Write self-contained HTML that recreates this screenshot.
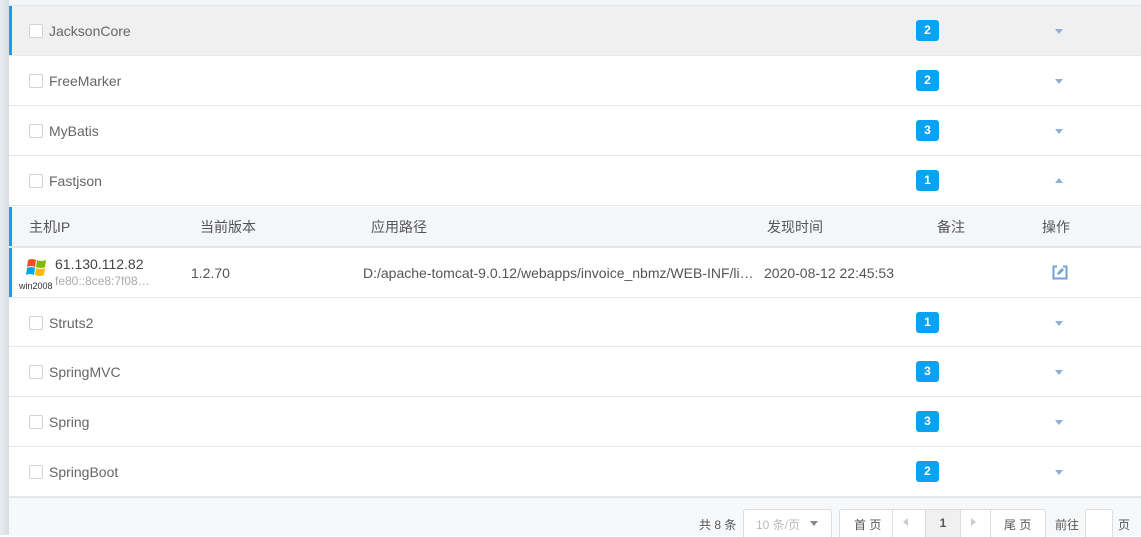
<html><head><style>
body{margin:0;width:1141px;height:535px;overflow:hidden;background:#fff;font-family:"Liberation Sans","Noto Sans CJK SC",sans-serif;position:relative}
.strip{position:absolute;left:0;top:0;width:9px;height:535px;background:linear-gradient(90deg,#e9ecf1,#d8dde5)}
.topline{position:absolute;left:9px;top:0;right:0;height:5px;background:#f3f5f8;border-bottom:1px solid #e3e6eb}
.row{position:absolute;left:9px;right:0;height:49px;border-bottom:1px solid #e6e8ec;background:#fff}
.row .cb{position:absolute;left:20px;top:18px;width:12px;height:12px;border:1px solid #cfd3d9;border-radius:2px;background:#fff}
.row .t{position:absolute;left:40px;top:17px;font-size:14px;color:#666}
.badge{position:absolute;left:907px;top:14px;width:23px;height:21px;background:#0aa3f2;border-radius:3px;color:#fff;font-size:12px;font-weight:bold;text-align:center;line-height:21px}
.arr{position:absolute;left:1046px;top:23px;width:0;height:0;border-left:4px solid transparent;border-right:4px solid transparent;border-top:5px solid #8fb0d4}
.arr.up{border-top:0;border-bottom:5px solid #8fb0d4;top:22px}
.sel{background:#f0f0f0}
.bar{position:absolute;left:0;top:0;width:3px;height:100%;background:#0aa3f2}
.hdr{position:absolute;left:9px;right:0;top:207px;height:39px;background:#f4f6f9;border-bottom:2px solid #e3e6eb;font-size:14px;color:#555}
.hdr span,.dr span{position:absolute;top:10px}
.dr{position:absolute;left:9px;right:0;top:248px;height:49px;border-bottom:1px solid #e6e8ec;font-size:14px;color:#555}
.foot{position:absolute;left:9px;right:0;top:497px;height:38px;background:#f7f8fa;border-top:1px solid #e3e6eb;font-size:12px;color:#555}
.box{position:absolute;top:11px;height:27px;border:1px solid #ddd;background:#fff;border-bottom:none;border-radius:3px 3px 0 0}
</style></head><body>
<div class="strip"></div><div class="topline"></div>
<div class="row sel" style="top:6px"><div class="bar"></div><div class="cb"></div><div class="t">JacksonCore</div><div class="badge">2</div><div class="arr"></div></div>
<div class="row" style="top:56px"><div class="cb"></div><div class="t">FreeMarker</div><div class="badge">2</div><div class="arr"></div></div>
<div class="row" style="top:106px"><div class="cb"></div><div class="t">MyBatis</div><div class="badge">3</div><div class="arr"></div></div>
<div class="row" style="top:156px"><div class="cb"></div><div class="t">Fastjson</div><div class="badge">1</div><div class="arr up"></div></div>
<div class="hdr"><div class="bar"></div><span style="left:20px">主机IP</span><span style="left:191px">当前版本</span><span style="left:362px">应用路径</span><span style="left:758px">发现时间</span><span style="left:928px">备注</span><span style="left:1033px">操作</span></div>
<div class="dr"><div class="bar"></div>
<svg style="position:absolute;left:17px;top:9px" width="22" height="20" viewBox="0 0 22 20"><path d="M2 3q4-2 8 0l-1 7q-4-2-8 0z" fill="#f25022"/><path d="M11 3q4 2 9 0l-1 7q-4 2-9 0z" fill="#7fba00"/><path d="M1 11q4-2 8 0l-1 7q-4-2-8 0z" fill="#00a4ef"/><path d="M10 11q4 2 9 0l-1 7q-4 2-9 0z" fill="#ffb900"/></svg>
<span style="left:10px;top:33px;font-size:9px;color:#333">win2008</span>
<span style="left:46px;top:8px;color:#444">61.130.112.82</span>
<span style="left:46px;top:26px;font-size:12px;color:#aaa">fe80::8ce8:7f08…</span>
<span style="left:182px;top:17px">1.2.70</span>
<span style="left:354px;top:17px">D:/apache-tomcat-9.0.12/webapps/invoice_nbmz/WEB-INF/li…</span>
<span style="left:755px;top:17px">2020-08-12 22:45:53</span>
<svg style="position:absolute;left:1043px;top:16px" width="16" height="16" viewBox="0 0 16 16"><rect x="1.5" y="2.5" width="13" height="12" fill="none" stroke="#6fa3d6" stroke-width="2"/><rect x="5" y="1" width="6" height="3" fill="#fff"/><path d="M5 11l1-3 4-4 2 2-4 4z" fill="#6fa3d6"/></svg>
</div>
<div class="row" style="top:298px;height:48px"><div class="cb"></div><div class="t">Struts2</div><div class="badge">1</div><div class="arr"></div></div>
<div class="row" style="top:347px"><div class="cb"></div><div class="t">SpringMVC</div><div class="badge">3</div><div class="arr"></div></div>
<div class="row" style="top:397px"><div class="cb"></div><div class="t">Spring</div><div class="badge">3</div><div class="arr"></div></div>
<div class="row" style="top:447px"><div class="cb"></div><div class="t">SpringBoot</div><div class="badge">2</div><div class="arr"></div></div>
<div class="foot">
<span style="position:absolute;left:690px;top:18px">共 8 条</span>
<div class="box" style="left:734px;width:87px"><span style="position:absolute;left:12px;top:6px;color:#bbb">10 条/页</span><span style="position:absolute;left:66px;top:11px;border-left:4px solid transparent;border-right:4px solid transparent;border-top:5px solid #888"></span></div>
<div class="box" style="left:830px;width:205px">
<span style="position:absolute;left:14px;top:6px">首 页</span>
<span style="position:absolute;left:52px;top:0;width:33px;height:27px;border-left:1px solid #ddd"></span>
<span style="position:absolute;left:63px;top:8px;border-top:4px solid transparent;border-bottom:4px solid transparent;border-right:5px solid #ccc"></span>
<span style="position:absolute;left:85px;top:0;width:34px;height:27px;background:#f0f0f0;border-left:1px solid #ddd;border-right:1px solid #ddd;text-align:center;line-height:27px;font-weight:bold">1</span>
<span style="position:absolute;left:131px;top:8px;border-top:4px solid transparent;border-bottom:4px solid transparent;border-left:5px solid #ccc"></span>
<span style="position:absolute;left:150px;top:0;height:27px;border-left:1px solid #ddd"></span>
<span style="position:absolute;left:164px;top:6px">尾 页</span></div>
<span style="position:absolute;left:1046px;top:18px">前往</span>
<div class="box" style="left:1076px;width:26px"></div>
<span style="position:absolute;left:1109px;top:18px">页</span>
</div>
</body></html>
